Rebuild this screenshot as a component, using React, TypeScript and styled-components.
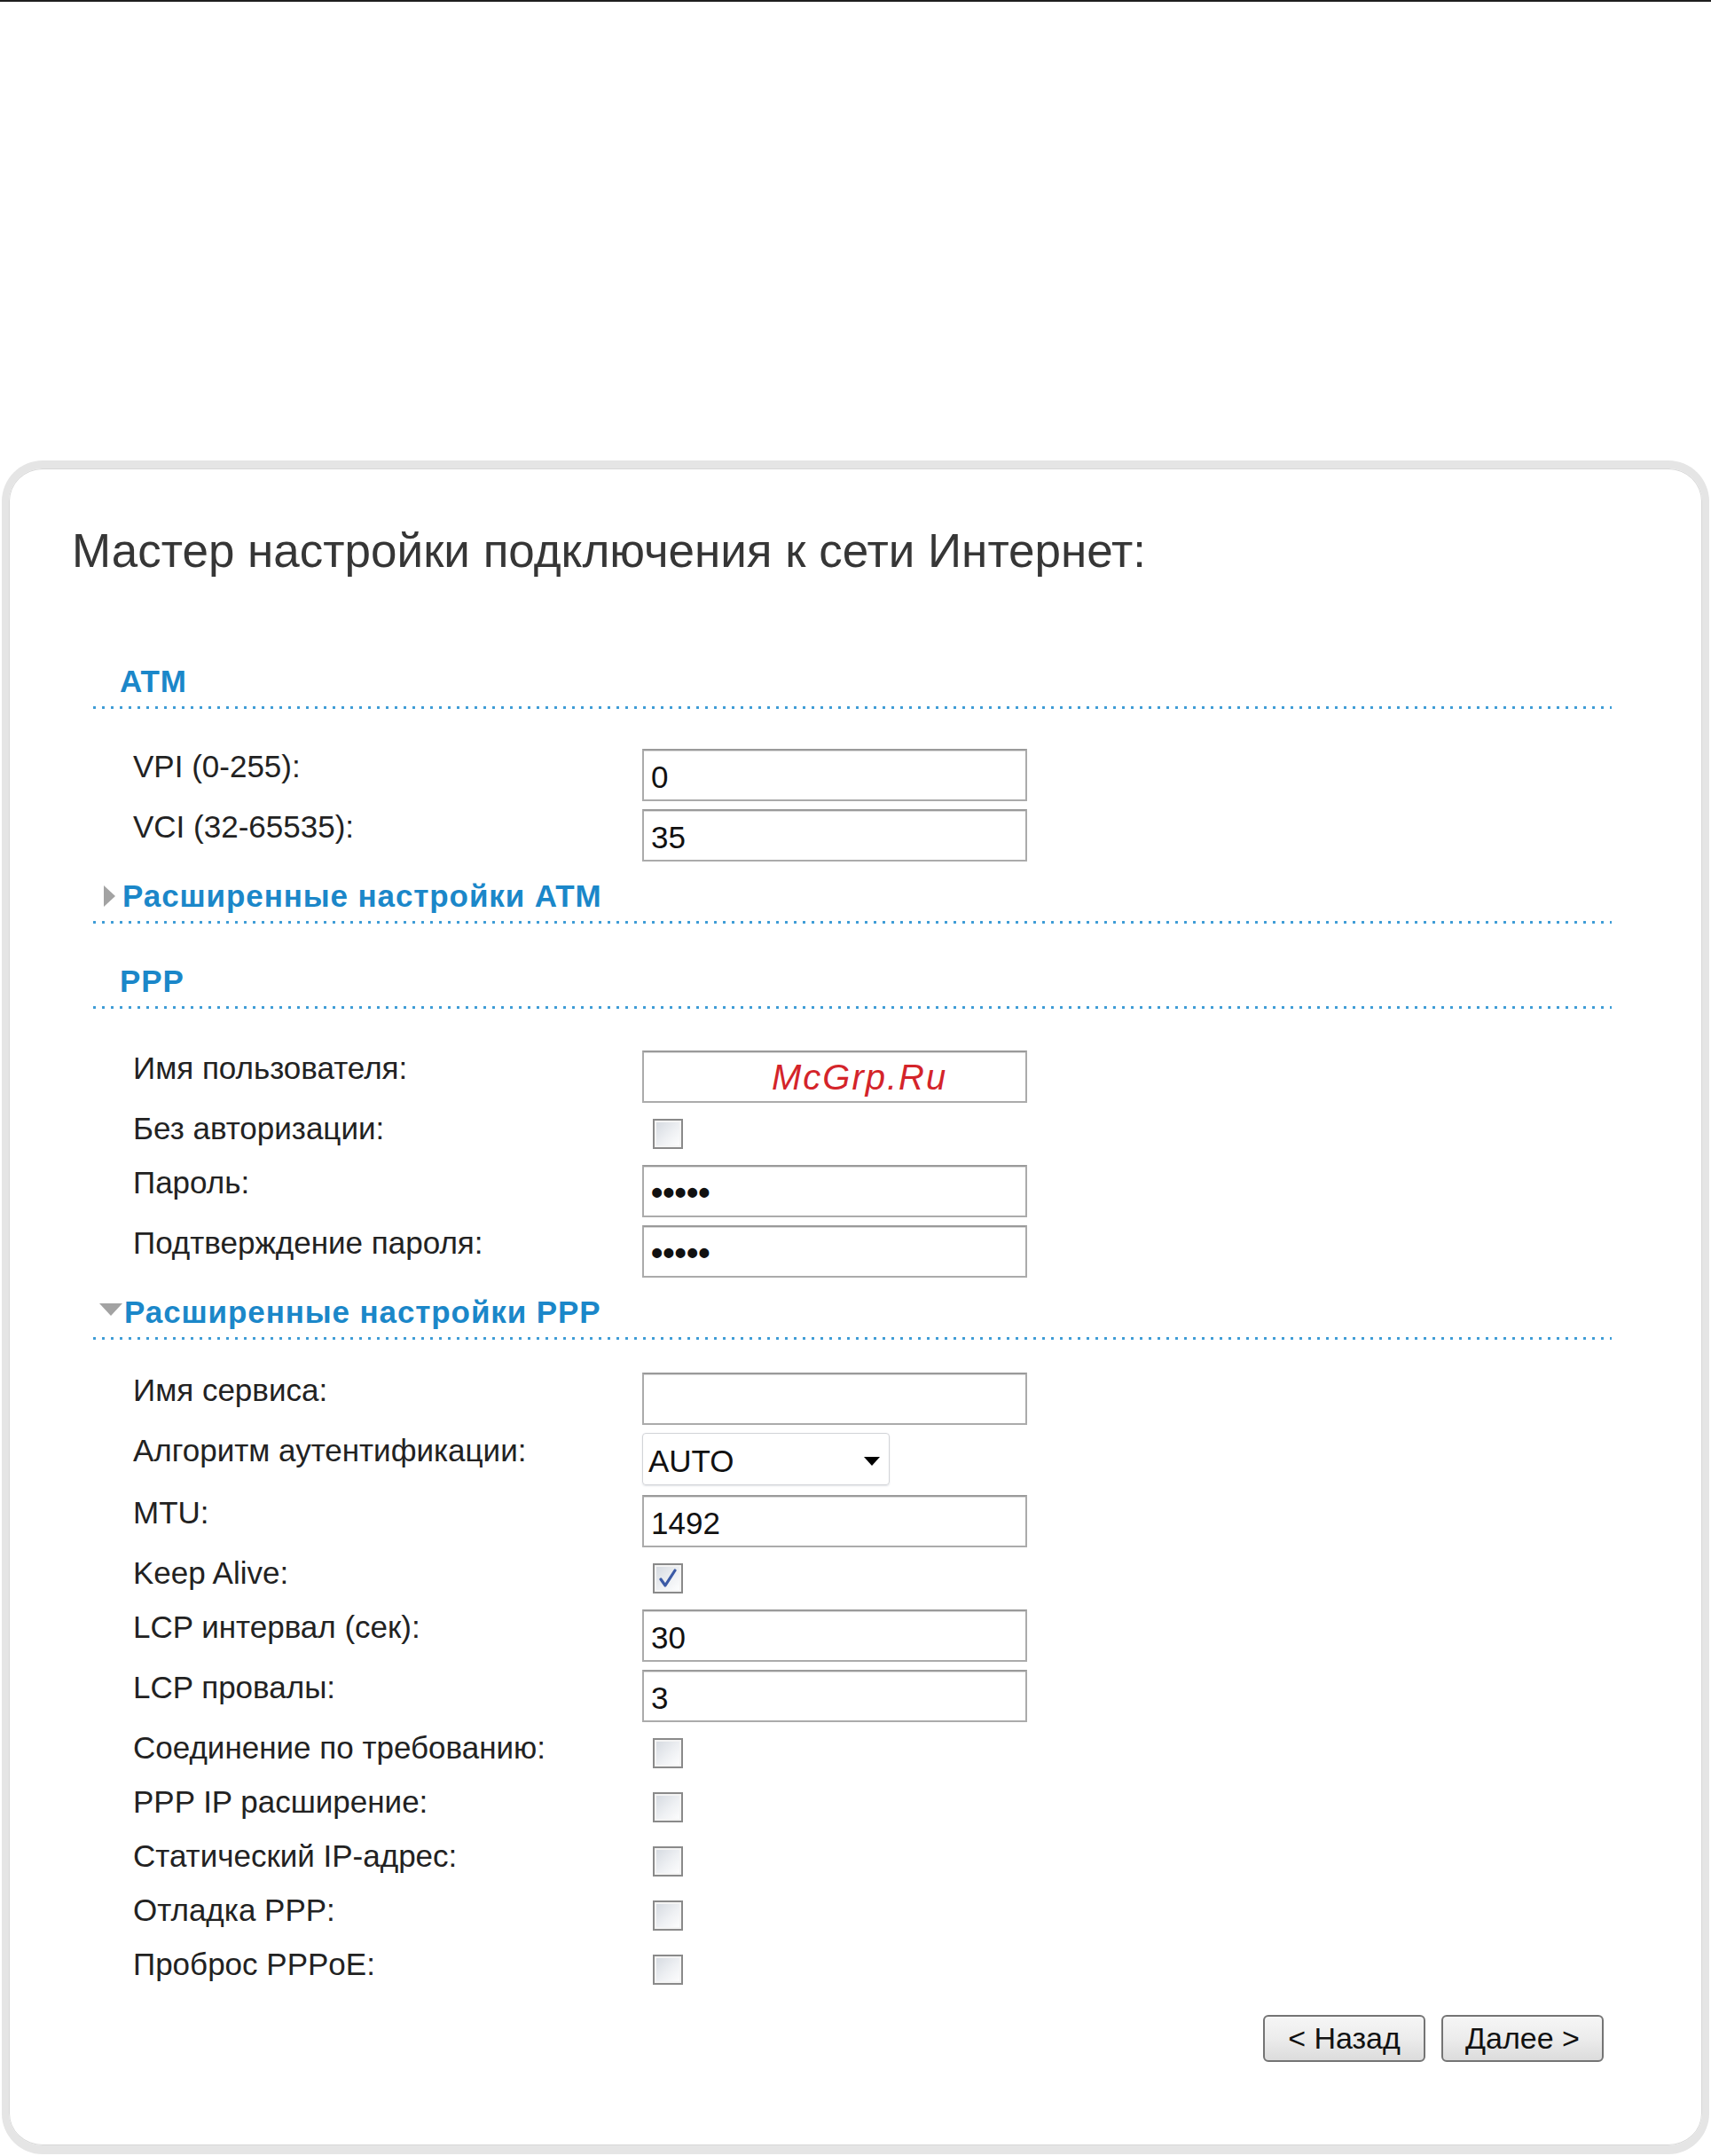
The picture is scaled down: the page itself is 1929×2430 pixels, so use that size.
import React from 'react'
import styled, {createGlobalStyle} from 'styled-components'

const GlobalStyle = createGlobalStyle`
	html, body {
		margin: 0;
		padding: 0;
		background: #ffffff;
	}
	body {
		font-family: "Liberation Sans", Arial, sans-serif;
		border-top: 2px solid #1e1e1e;
	}
`

type Field =
	| {kind: 'text'; label: string; value?: string; password?: boolean; mark?: boolean}
	| {kind: 'check'; label: string; checked?: boolean}
	| {kind: 'select'; label: string; value: string}

const atmFields: Field[] = [
	{kind: 'text', label: 'VPI (0-255):', value: '0'},
	{kind: 'text', label: 'VCI (32-65535):', value: '35'},
]

const pppFields: Field[] = [
	{kind: 'text', label: 'Имя пользователя:', value: '', mark: true},
	{kind: 'check', label: 'Без авторизации:'},
	{kind: 'text', label: 'Пароль:', value: '•••••', password: true},
	{kind: 'text', label: 'Подтверждение пароля:', value: '•••••', password: true},
]

const advFields: Field[] = [
	{kind: 'text', label: 'Имя сервиса:', value: ''},
	{kind: 'select', label: 'Алгоритм аутентификации:', value: 'AUTO'},
	{kind: 'text', label: 'MTU:', value: '1492'},
	{kind: 'check', label: 'Keep Alive:', checked: true},
	{kind: 'text', label: 'LCP интервал (сек):', value: '30'},
	{kind: 'text', label: 'LCP провалы:', value: '3'},
	{kind: 'check', label: 'Соединение по требованию:'},
	{kind: 'check', label: 'PPP IP расширение:'},
	{kind: 'check', label: 'Статический IP-адрес:'},
	{kind: 'check', label: 'Отладка PPP:'},
	{kind: 'check', label: 'Проброс PPPoE:'},
]

const CheckBox = ({checked}: {checked?: boolean}) => (
	<Box>
		{checked && (
			<svg width="22" height="24" viewBox="0 0 22 24">
				<path d="M3 13 L8 20 L19 3" fill="none" stroke="#3b5aa6" strokeWidth="3.2" strokeLinecap="round" strokeLinejoin="round"/>
			</svg>
		)}
	</Box>
)

const FieldRow = ({field}: {field: Field}) => {
	if (field.kind === 'check') {
		return <Row $h={61}>
			<Label>{field.label}</Label>
			<CheckCell><CheckBox checked={field.checked}/></CheckCell>
		</Row>
	}
	if (field.kind === 'select') {
		return <Row $h={70}>
			<Label>{field.label}</Label>
			<Select>
				<span>{field.value}</span>
				<Caret/>
			</Select>
		</Row>
	}
	return <Row $h={68}>
		<Label>{field.label}</Label>
		<InputWrap>
			<TextInput
				type="text"
				defaultValue={field.value}
				readOnly
				$dots={field.password}
			/>
			{field.mark && <Watermark>McGrp.Ru</Watermark>}
		</InputWrap>
	</Row>
}

export default function App() {
	return <>
		<GlobalStyle/>
		<Card>
			<Title>Мастер настройки подключения к сети Интернет:</Title>
			<Content>
				<SectionHead $top={93}><HeadText>ATM</HeadText></SectionHead>
				<Dots/>
				<Fields $top={45}>
					{atmFields.map(f => <FieldRow key={f.label} field={f}/>)}
				</Fields>

				<SectionHead $top={8} $toggle>
					<ArrowRight/>
					<HeadText>Расширенные настройки ATM</HeadText>
				</SectionHead>
				<Dots/>

				<SectionHead $top={43}><HeadText>PPP</HeadText></SectionHead>
				<Dots/>
				<Fields $top={47}>
					{pppFields.map(f => <FieldRow key={f.label} field={f}/>)}
				</Fields>

				<SectionHead $top={8} $toggle>
					<ArrowDown/>
					<HeadText>Расширенные настройки PPP</HeadText>
				</SectionHead>
				<Dots/>
				<Fields $top={37}>
					{advFields.map(f => <FieldRow key={f.label} field={f}/>)}
				</Fields>

				<Buttons>
					<Button>&lt; Назад</Button>
					<Button>Далее &gt;</Button>
				</Buttons>
			</Content>
		</Card>
	</>
}

const Card = styled.div`
	margin: 517px 2px 2px 2px;
	height: 1909px;
	box-sizing: border-box;
	border: 8px solid #e5e5e5;
	border-top-width: 9px;
	border-bottom-width: 10px;
	border-radius: 46px;
	background: #fff;
	box-shadow: inset 0 0 0 1px #d8d8d8;
`

const Title = styled.h1`
	margin: 0;
	padding: 61px 0 0 71px;
	font-weight: normal;
	font-size: 53px;
	line-height: 64px;
	color: #363636;
	font-family: "Liberation Sans", Arial, sans-serif;
`

const Content = styled.div`
	padding: 0 102px 0 95px;
`

const SectionHead = styled.div<{$top: number; $toggle?: boolean}>`
	margin-top: ${p => p.$top}px;
	height: 44px;
	display: flex;
	align-items: center;
	padding-left: ${p => p.$toggle ? '7px' : '30px'};
	gap: 8px;
`

const HeadText = styled.span`
	font-weight: bold;
	font-size: 35px;
	color: #1b87c9;
	letter-spacing: 0.9px;
`

const ArrowRight = styled.span`
	width: 0;
	height: 0;
	margin-left: 5px;
	border-top: 12px solid transparent;
	border-bottom: 12px solid transparent;
	border-left: 13px solid #a3a3a3;
`

const ArrowDown = styled.span`
	width: 0;
	height: 0;
	margin-top: -6px;
	border-left: 13px solid transparent;
	border-right: 13px solid transparent;
	border-top: 14px solid #a3a3a3;
	margin-right: -6px;
`

const Dots = styled.div`
	margin-top: 6px;
	height: 3px;
	background-image: radial-gradient(circle at 1.5px 1.5px, #3d9cd6 1.4px, transparent 1.7px);
	background-size: 10px 3px;
	background-repeat: repeat-x;
`

const Fields = styled.div<{$top: number}>`
	margin-top: ${p => p.$top}px;
	display: flex;
	flex-direction: column;
`

const Row = styled.div<{$h: number}>`
	height: ${p => p.$h}px;
	display: grid;
	grid-template-columns: 574px 1fr;
	align-items: start;
	padding-left: 45px;
`

const Label = styled.div`
	font-size: 35px;
	line-height: 40px;
	color: #222;
`

const InputWrap = styled.div`
	position: relative;
	width: 434px;
	height: 59px;
`

const TextInput = styled.input<{$dots?: boolean}>`
	box-sizing: border-box;
	width: 100%;
	height: 100%;
	margin: 0;
	border: 2px solid #ababab;
	border-top-color: #9a9a9a;
	box-shadow: inset 0 1px 0 #dcdcdc;
	padding: 4px 8px 0;
	font-family: "Liberation Sans", Arial, sans-serif;
	font-size: ${p => p.$dots ? '38px' : '35px'};
	font-weight: ${p => p.$dots ? 'bold' : 'normal'};
	color: #111;
	letter-spacing: 0;
	background: #fff;
	outline: none;
`

const Watermark = styled.span`
	position: absolute;
	left: 146px;
	top: 8px;
	font-family: "Liberation Sans", Arial, sans-serif;
	font-style: italic;
	font-size: 40px;
	letter-spacing: 2px;
	color: #d4242a;
`

const CheckCell = styled.div`
	padding: 9px 0 0 12px;
`

const Box = styled.span`
	box-sizing: border-box;
	width: 34px;
	height: 34px;
	display: flex;
	align-items: center;
	justify-content: center;
	border: 2px solid #8a8a8a;
	box-shadow: inset 0 0 0 2px #f4f4f4;
	background: linear-gradient(135deg, #d3d8df 0%, #eef0f3 55%, #ffffff 100%);
`

const Select = styled.div`
	box-sizing: border-box;
	width: 279px;
	height: 59px;
	display: flex;
	align-items: center;
	justify-content: space-between;
	padding: 4px 10px 0 6px;
	border: 1px solid #d2d4d8;
	border-radius: 4px;
	box-shadow: 0 1px 2px #e2e4e8;
	font-size: 35px;
	color: #111;
`

const Caret = styled.span`
	width: 0;
	height: 0;
	border-left: 9px solid transparent;
	border-right: 9px solid transparent;
	border-top: 10px solid #000;
`

const Buttons = styled.div`
	margin-top: 16px;
	padding-right: 9px;
	display: flex;
	justify-content: flex-end;
	gap: 18px;
`

const Button = styled.button`
	box-sizing: border-box;
	width: 183px;
	height: 53px;
	padding: 0;
	border: 2px solid #747474;
	border-radius: 6px;
	background: linear-gradient(to bottom, #f6f6f6 0%, #ececec 50%, #dcdcdc 100%);
	font-family: "Liberation Sans", Arial, sans-serif;
	font-size: 34px;
	color: #111;
`
